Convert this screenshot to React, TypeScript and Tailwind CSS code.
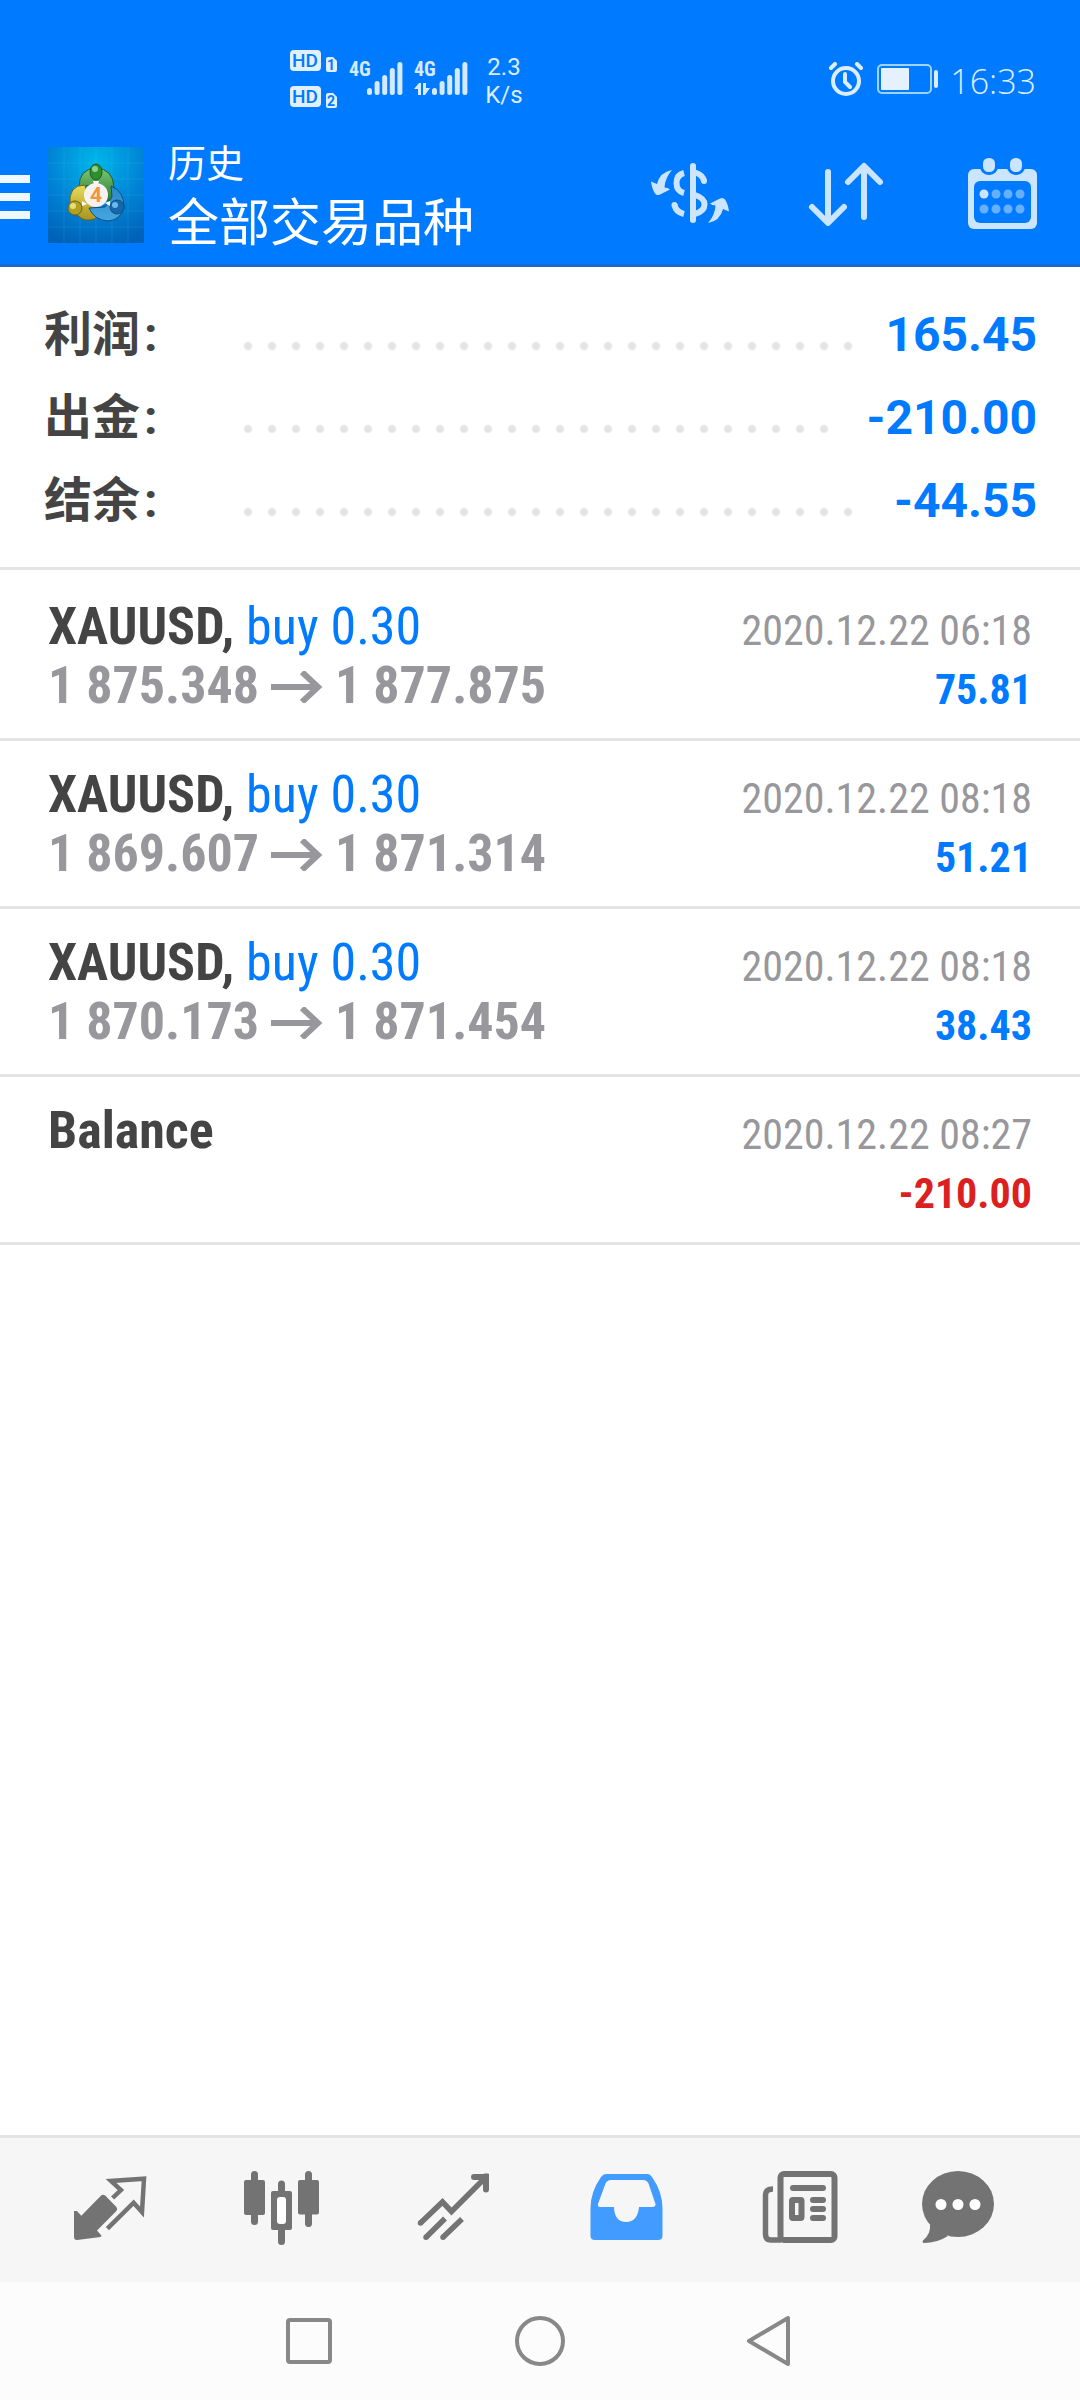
import React from 'react';

const summary = [
  { label: '利润', value: '165.45' },
  { label: '出金', value: '-210.00' },
  { label: '结余', value: '-44.55' },
];

const deals = [
  { symbol: 'XAUUSD,', side: 'buy 0.30', from: '1 875.348', to: '1 877.875', time: '2020.12.22 06:18', profit: '75.81' },
  { symbol: 'XAUUSD,', side: 'buy 0.30', from: '1 869.607', to: '1 871.314', time: '2020.12.22 08:18', profit: '51.21' },
  { symbol: 'XAUUSD,', side: 'buy 0.30', from: '1 870.173', to: '1 871.454', time: '2020.12.22 08:18', profit: '38.43' },
  { symbol: 'Balance', time: '2020.12.22 08:27', profit: '-210.00' },
];

const HdBadges: React.FC = () => (
  <svg viewBox="0 0 48 58" className="w-12 h-[58px] fill-[#e0f0ff]" aria-label="HD">
    {[0, 36].map((y, i) => (
      <g key={y} transform={`translate(0 ${y})`}>
        <rect width="31" height="21" rx="4" />
        <text x="15" y="17" textAnchor="middle" className="fill-[#007bff] text-[19px] font-medium">HD</text>
        <path d="M36 9q0-2 2-2h5l4 4v9q0 2-2 2h-7q-2 0-2-2z" />
        <text x="41" y="20" textAnchor="middle" className="fill-[#007bff] text-[14px] font-bold">{i + 1}</text>
      </g>
    ))}
  </svg>
);

const Signal: React.FC<{ active?: boolean }> = ({ active }) => (
  <svg viewBox="0 -6 54 48" className="w-[54px] h-12 fill-[#d6eaff]">
    <text x="0" y="15" className="text-[20px] font-bold font-['Roboto_Condensed','Liberation_Sans_Narrow',sans-serif]">4G</text>
    {[27, 20, 14, 7, 1].map((y, i) => (
      <rect key={y} x={18 + i * 7.6} y={y} width="5" height={34 - y} rx="2.5" />
    ))}
    {active && <path d="M0 28l5-6h2v12H4v-6zM9 22h3v5h4l-5 7H9z" />}
  </svg>
);

const StatusBar: React.FC = () => (
  <div className="h-[126px] pt-8 pl-[290px] pr-11 flex items-center text-[#dcedff]">
    <HdBadges />
    <div className="ml-[11px] flex gap-[11px]">
      <Signal />
      <Signal active />
    </div>
    <div className="ml-3 pt-1 w-12 text-[24px] leading-7 text-center">2.3<br />K/s</div>
    <div className="ml-auto flex items-center">
      <svg viewBox="0 0 34 34" className="w-[34px] h-[34px]" fill="none" stroke="currentColor" strokeWidth="4" strokeLinecap="round">
        <circle cx="17" cy="19" r="13" />
        <path d="M16 12v8l5 5M2 6l4-4M32 6l-4-4" />
      </svg>
      <svg viewBox="0 0 62 30" className="ml-[14px] w-[62px] h-[30px]">
        <rect x="1" y="1" width="53" height="28" rx="4" fill="none" stroke="#9dd3ff" strokeWidth="2" />
        <rect x="4" y="4" width="28" height="22" rx="1" fill="#e4f1ff" />
        <rect x="57" y="6" width="4" height="18" rx="2" fill="currentColor" />
      </svg>
      <span className="ml-[11px] pt-1 text-[34px] leading-10 font-light font-['Open_Sans','Noto_Sans',sans-serif]">16:33</span>
    </div>
  </div>
);

const AppLogo: React.FC = () => (
  <svg viewBox="0 0 96 96" className="w-24 h-24 shrink-0">
    <defs>
      <radialGradient id="sky" cx="50%" cy="15%" r="90%">
        <stop offset="0" stopColor="#00b6ea" />
        <stop offset="0.55" stopColor="#0083d6" />
        <stop offset="1" stopColor="#0062b8" />
      </radialGradient>
      <linearGradient id="green" x2="0" y2="1">
        <stop offset="0" stopColor="#7cc576" />
        <stop offset="1" stopColor="#2a7a2c" />
      </linearGradient>
      <linearGradient id="gold" x2="0" y2="1">
        <stop offset="0" stopColor="#e9dc5a" />
        <stop offset="1" stopColor="#a8941c" />
      </linearGradient>
      <linearGradient id="azure" x2="0" y2="1">
        <stop offset="0" stopColor="#2a86c8" />
        <stop offset="1" stopColor="#45a8e2" />
      </linearGradient>
    </defs>
    <rect width="96" height="96" fill="url(#sky)" />
    <path d="M16 0v96M32 0v96M48 0v96M64 0v96M80 0v96M0 16h96M0 32h96M0 48h96M0 64h96M0 80h96" stroke="#5cc6f5" strokeOpacity="0.15" />
    <g strokeWidth="1">
      <path d="M31 40Q31 22 48 21Q65 22 66 40Q66 50 61 55L48 38L36 39Q32 39 31 40z" fill="url(#green)" stroke="#1f5a2c" />
      <path d="M22 58Q20 38 37 38L40 52L53 66Q48 74 38 73Q30 72 22 58z" fill="url(#gold)" stroke="#6d6418" />
      <path d="M63 39Q76 44 76 60Q73 73 60 74Q46 73 41 61L57 60L64 50z" fill="url(#azure)" stroke="#124d85" />
      <path d="M34 54l5 3-5 2zM57 56l5-2v5zM45 34h6l-1 3h-4z" fill="#fff" />
      <ellipse cx="48" cy="25" rx="6" ry="8" fill="#2f8f2b" stroke="#1f5a2c" />
      <ellipse cx="47" cy="22" rx="3" ry="3" fill="#8fd08b" />
      <ellipse cx="27" cy="61" rx="7" ry="7" fill="#b3a022" stroke="#6d6418" />
      <ellipse cx="25" cy="59" rx="3" ry="3" fill="#e8dd7c" />
      <ellipse cx="69" cy="60" rx="7" ry="7" fill="#1668ad" stroke="#124d85" />
      <ellipse cx="67" cy="58" rx="3" ry="3" fill="#6fb8ea" />
    </g>
    <circle cx="48" cy="48" r="12" fill="#f6f2f2" />
    <text x="48" y="55" textAnchor="middle" fill="#f5943a" className="text-[21px] font-bold">4</text>
  </svg>
);

const Header: React.FC = () => (
  <header className="bg-[#007bff] border-b-[3px] border-[#1a6acb]">
    <StatusBar />
    <div className="h-[138px] flex items-center">
      <button aria-label="Menu" className="pt-1 w-12 h-24 shrink-0 flex flex-col justify-center gap-[10px]">
        <span className="w-[30px] h-2 bg-[#eff7ff]" />
        <span className="w-[30px] h-2 bg-[#eff7ff]" />
        <span className="w-[30px] h-2 bg-[#eff7ff]" />
      </button>
      <AppLogo />
      <div className="pl-6 pt-2 flex-1 text-white">
        <p className="text-[38px] leading-[50px]">历史</p>
        <h1 className="text-[51px] leading-[70px]">全部交易品种</h1>
      </div>
      <button aria-label="Symbols" className="w-[156px] flex justify-center text-[#cce5ff]">
        <svg viewBox="0 0 96 96" className="w-24 h-24">
          <g fill="currentColor">
            <path id="swap" d="M30 23Q18 25 15 37L9 34.500Q10 42 13 46.500Q15 49 18 47.500L28 42.500Q26 40.500 22.500 40.500Q23 31 30 23z" />
            <use href="#swap" transform="rotate(180 48 49.500)" />
            <rect x="48" y="16" width="6" height="60" rx="3" />
          </g>
          <g fill="none" stroke="currentColor" strokeWidth="6">
            <path d="M42 26Q34.500 28 34.500 36T42 46" />
            <path d="M42 67Q34 65 32.500 58" />
            <path d="M53 25.500Q61 28 62 34" />
            <path d="M53 48Q62.500 51 62.500 57.500T53 67" />
          </g>
          <g fill="currentColor">
            <circle cx="32.500" cy="58" r="3" />
            <circle cx="62" cy="34" r="3" />
          </g>
        </svg>
      </button>
      <button aria-label="Sort" className="w-[156px] flex justify-center text-[#cce5ff]">
        <svg viewBox="0 0 96 96" className="w-24 h-24" fill="none" stroke="currentColor" strokeWidth="6" strokeLinecap="round" strokeLinejoin="round">
          <path d="M30 25v50M14 60l16 16 16-16M66 70V20M50 35l16-16 16 16" />
        </svg>
      </button>
      <button aria-label="Period" className="w-[156px] flex justify-center text-[#cce5ff]">
        <svg viewBox="0 0 96 96" className="w-24 h-24" fill="currentColor">
          <rect x="14" y="22" width="69" height="60" rx="6" />
          <rect x="20" y="34" width="57" height="42" rx="6" fill="#007bff" />
          <rect x="27.500" y="9.500" width="15" height="17" rx="7" stroke="#007bff" strokeWidth="3" />
          <rect x="54.500" y="9.500" width="15" height="17" rx="7" stroke="#007bff" strokeWidth="3" />
          {[47, 62].map((cy) =>
            [30, 42, 54, 66].map((cx) => (
              <circle key={`${cx}-${cy}`} cx={cx} cy={cy} r="4.500" fill={cx + cy === 77 ? '#cce5ff' : '#66b0ff'} />
            ))
          )}
        </svg>
      </button>
    </div>
  </header>
);

const Summary: React.FC = () => (
  <dl className="pl-11 pr-[43px] pt-[26px] pb-[25px] border-b-[3px] border-[#e4e4e4]">
    {summary.map(({ label, value }) => (
      <div key={label} className="h-[83px] flex items-center font-bold text-[48px] leading-[56px]">
        <dt className="w-48 h-14 text-[#444]">{label}<span className="ml-1">:</span></dt>
        <span className="flex-1 mt-[22px] mr-[26px] h-[10px] bg-[radial-gradient(circle,#e4e4e4_3px,transparent_5px)] bg-[length:24px_10px] bg-repeat-x" />
        <dd className="text-[#007bff]">{value}</dd>
      </div>
    ))}
  </dl>
);

const Arrow: React.FC = () => (
  <svg viewBox="0 0 52 32" className="inline-block w-[52px] h-8 mt-[2px] mx-3" fill="none" stroke="currentColor" strokeWidth="6">
    <path d="M0 16h47M31 1l16 15-16 15" />
  </svg>
);

const Deals: React.FC = () => (
  <ul className="pt-[3px] font-['Roboto_Condensed','Liberation_Sans_Narrow',Roboto,sans-serif]">
    {deals.map((deal, i) => (
      <li key={i} className="h-[168px] px-12 pt-6 flex justify-between border-b-[3px] border-[#e4e4e4] whitespace-nowrap">
        <div className="text-[52px] leading-[59px]">
          <p>
            <b className="font-bold text-[#444]">{deal.symbol}</b>
            {deal.side && <span className="text-[#007bff]"> {deal.side}</span>}
          </p>
          {deal.from && (
            <p className="flex items-center font-bold text-[#97979c]">{deal.from}<Arrow />{deal.to}</p>
          )}
        </div>
        <div className="pt-1 text-right text-[42px] leading-[59px]">
          <p className="text-[#97979c]">{deal.time}</p>
          <p className={deal.profit.startsWith('-') ? 'font-bold text-[#dc1f21]' : 'font-bold text-[#007bff]'}>{deal.profit}</p>
        </div>
      </li>
    ))}
  </ul>
);

const TabBar: React.FC = () => (
  <nav className="px-6 h-[147px] grid grid-cols-6 items-center justify-items-center bg-[#f6f6f6] border-t-[3px] border-[#e4e4e4] text-[#737373]">
    <button aria-label="Quotes">
      <svg viewBox="0 0 96 96" className="w-24 h-24">
        <path d="M12 49h3l4.300 4.700L38.900 33.700Q41 31.800 43.400 33.700L54.400 45Q56 47 54.400 49L35 68.500 39.600 73.700 38.500 75 15 78Q12 78 12 75z" fill="currentColor" />
        <path d="M50.600 36L58.900 28 49 19 82 16.700 80 50 71.600 40.700 45.400 66.700" fill="none" stroke="currentColor" strokeWidth="4.500" />
      </svg>
    </button>
    <button aria-label="Charts">
      <svg viewBox="0 0 96 96" className="w-24 h-24" fill="currentColor">
        <rect x="10" y="18" width="21" height="35" rx="2" />
        <rect x="17" y="9" width="7" height="54" rx="3.500" />
        <rect x="44" y="18.500" width="7" height="64.500" rx="3.500" />
        <rect x="37" y="29" width="21" height="39" rx="2" />
        <rect x="43" y="35" width="9" height="27" rx="3" fill="#fff" />
        <rect x="64" y="18" width="21" height="34.500" rx="2" />
        <rect x="71" y="9" width="7" height="56" rx="3.500" />
      </svg>
    </button>
    <button aria-label="Trade">
      <svg viewBox="0 0 96 96" className="w-24 h-24" fill="none" stroke="currentColor" strokeWidth="5.500">
        <path d="M14.500 61L36.500 40 45.500 49.500 80 15M20 75.300L39 56.500M37 75.300L56 57" />
        <path d="M68 15H80V27.500" strokeWidth="6" strokeLinecap="round" strokeLinejoin="round" />
        <path d="M14.500 61h0M20 75.300h0M37 75.300h0" strokeLinecap="round" />
        <path d="M78 12h4.500v5" strokeWidth="1" fill="currentColor" />
      </svg>
    </button>
    <button aria-label="History" aria-current="page" className="text-[#429bff]">
      <svg viewBox="0 0 96 96" className="w-24 h-24" fill="currentColor">
        <path fillRule="evenodd" d="M28 12H69.500Q72 12 74 15Q84.500 30 84.500 46V74Q84.500 78 80 78H17Q12.500 78 12.500 74V46Q12.500 30 23 15Q25 12 28 12zM33 18Q29 18 27.500 21.500L20 42Q19.500 45 22 45H36Q36.500 60 48 60T61 45H74Q78 45 77.500 42L70.500 21.500Q69 18 65 18z" />
      </svg>
    </button>
    <button aria-label="News">
      <svg viewBox="0 0 96 96" className="w-24 h-24" fill="none" stroke="currentColor" strokeWidth="6">
        <rect x="30.500" y="12" width="54" height="66" rx="3.500" />
        <path d="M23 27Q15.500 27 15.500 33V72Q15.500 78 21 78H31" strokeWidth="5.500" />
        <path d="M43 26H73M63 38H73M63 47H73M63 56H73" strokeLinecap="round" />
        <rect x="42" y="38" width="9.500" height="18" rx="1" />
      </svg>
    </button>
    <button aria-label="Chat">
      <svg viewBox="0 0 96 96" className="w-24 h-24" fill="currentColor">
        <ellipse cx="36" cy="42" rx="36" ry="33" />
        <path d="M8 62Q9 72 1 78.500Q0 81 2 81Q15 81 26 74z" />
        <g fill="#fff">
          <circle cx="19" cy="42.500" r="5.500" />
          <circle cx="36" cy="42.500" r="5.500" />
          <circle cx="53" cy="42.500" r="5.500" />
        </g>
      </svg>
    </button>
  </nav>
);

const SystemBar: React.FC = () => (
  <div className="h-[118px] px-[18%] grid grid-cols-3 items-center justify-items-center bg-[#fcfcfc] text-[#888]">
    <button aria-label="Recent">
      <svg viewBox="0 0 54 54" className="w-[54px] h-[54px]" fill="none" stroke="currentColor" strokeWidth="4">
        <rect x="5" y="6" width="42" height="42" rx="2" />
      </svg>
    </button>
    <button aria-label="Home">
      <svg viewBox="0 0 54 54" className="w-[54px] h-[54px]" fill="none" stroke="currentColor" strokeWidth="4">
        <circle cx="27" cy="27" r="23" />
      </svg>
    </button>
    <button aria-label="Back">
      <svg viewBox="0 0 54 54" className="w-[54px] h-[54px]" fill="none" stroke="currentColor" strokeWidth="4" strokeLinejoin="round">
        <path d="M45 4V50L6 27z" />
      </svg>
    </button>
  </div>
);

const App: React.FC = () => (
  <div className="min-h-screen flex flex-col bg-white font-['Roboto','Noto_Sans_CJK_SC',sans-serif]">
    <Header />
    <main className="flex-1">
      <Summary />
      <Deals />
    </main>
    <footer>
      <TabBar />
      <SystemBar />
    </footer>
  </div>
);

export default App;
